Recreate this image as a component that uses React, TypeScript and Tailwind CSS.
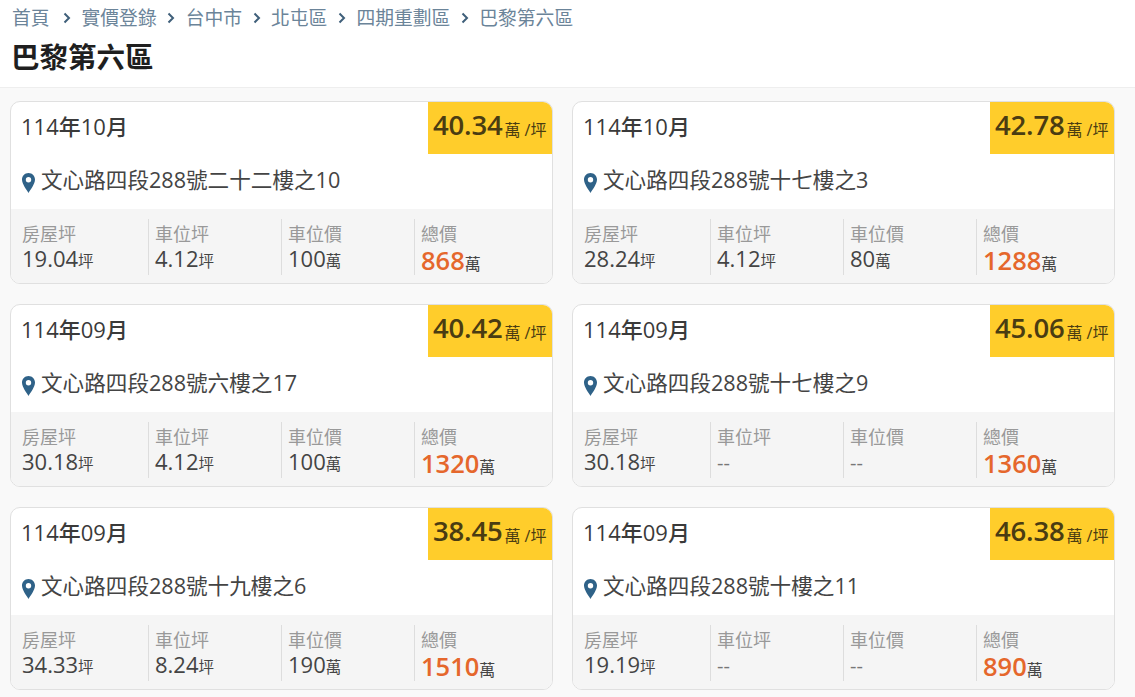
const crumbs = ["實價登錄", "台中市", "北屯區", "四期重劃區", "巴黎第六區"];

const deals = [
  { date: "114年10月", unit: "40.34", addr: "文心路四段288號二十二樓之10", house: "19.04", park: "4.12", parkPrice: "100", total: "868" },
  { date: "114年10月", unit: "42.78", addr: "文心路四段288號十七樓之3", house: "28.24", park: "4.12", parkPrice: "80", total: "1288" },
  { date: "114年09月", unit: "40.42", addr: "文心路四段288號六樓之17", house: "30.18", park: "4.12", parkPrice: "100", total: "1320" },
  { date: "114年09月", unit: "45.06", addr: "文心路四段288號十七樓之9", house: "30.18", park: "", parkPrice: "", total: "1360" },
  { date: "114年09月", unit: "38.45", addr: "文心路四段288號十九樓之6", house: "34.33", park: "8.24", parkPrice: "190", total: "1510" },
  { date: "114年09月", unit: "46.38", addr: "文心路四段288號十樓之11", house: "19.19", park: "", parkPrice: "", total: "890" },
];

function Chevron() {
  return (
    <svg width="8" height="12" viewBox="0 0 8 12" fill="none" className="mx-[10.500px] shrink-0">
      <path d="M1.500 1.500 6 6l-4.500 4.500" stroke="#3f5f7a" strokeWidth="2" />
    </svg>
  );
}

function Pin() {
  return (
    <svg width="13" height="20" viewBox="0 0 13 20" className="mt-[4px] shrink-0">
      <path
        fillRule="evenodd"
        d="M6.500 0C2.900 0 0 2.900 0 6.500 0 11 4.500 16.500 6.500 20 8.500 16.500 13 11 13 6.500 13 2.900 10.100 0 6.500 0Zm0 4a2.700 2.700 0 1 1 0 5.400 2.700 2.700 0 0 1 0-5.400Z"
        fill="#2f6288"
      />
    </svg>
  );
}

function Stat({ label, value, unit, first }: { label: string; value: string; unit: string; first?: boolean }) {
  return (
    <div className={first ? "h-[56px] w-[138px] border-r border-[#dddddd] pl-[11px] pt-[3px]" : "h-[56px] w-[133px] border-r border-[#dddddd] pl-[6px] pt-[3px]"}>
      <div className="text-[18px] leading-[24px] text-[#999999]">{label}</div>
      {value ? (
        <div className="h-[28px] text-[22px] leading-[25px] text-[#444444]">
          {value}
          <span className="text-[15.500px]">{unit}</span>
        </div>
      ) : (
        <div className="h-[28px] text-[20px] leading-[28px] text-[#777777]">--</div>
      )}
    </div>
  );
}

function DealCard({ deal }: { deal: (typeof deals)[number] }) {
  return (
    <div className="flex h-[183px] flex-col overflow-hidden rounded-[10px] border border-[#e0e0e0] bg-white">
      <div className="flex h-[52px] shrink-0 justify-between">
        <div className="pl-[10px] pt-[8px] text-[22px] leading-[32px] font-medium text-[#3a3a3a]">{deal.date}</div>
        <div className="flex w-[124px] items-start bg-[#ffcd2b] pl-[5px] pt-[4px] text-[#4a3c12]">
          <span className="text-[27.500px] leading-[38px] font-semibold tracking-[-0.2px]">{deal.unit}</span>
          <span className="pl-[2px] pt-[12px] text-[16px] leading-[24px] whitespace-pre">萬 /坪</span>
        </div>
      </div>
      <div className="flex h-[55px] shrink-0 items-center gap-[6px] pb-[2px] pl-[11px] text-[21.600px] text-[#444444]">
        <Pin />
        <span>{deal.addr}</span>
      </div>
      <div className="flex h-[74px] shrink-0 bg-[#f5f5f5] pt-[10px]">
        <Stat first label="房屋坪" value={deal.house} unit="坪" />
        <Stat label="車位坪" value={deal.park} unit="坪" />
        <Stat label="車位價" value={deal.parkPrice} unit="萬" />
        <div className="h-[56px] flex-1 pl-[6px] pt-[3px]">
          <div className="text-[18px] leading-[24px] text-[#999999]">總價</div>
          <div className="h-[28px] text-[16px] leading-[28px] text-[#444444]">
            <span className="text-[25.500px] font-semibold text-[#e5672c]">{deal.total}</span>萬
          </div>
        </div>
      </div>
    </div>
  );
}

export default function App() {
  return (
    <div className="h-[697px] overflow-hidden bg-[#f9f9f9] font-['Open_Sans','Noto_Sans_CJK_TC',sans-serif]">
      <div className="h-[88px] border-b border-[#eeeeee] bg-white pl-[12px] pt-[5px]">
        <div className="flex h-[26px] items-center text-[18.800px] text-[#6b8499]">
          <span className="mr-[3px]">首頁</span>
          {crumbs.map((c) => (
            <span key={c} className="flex items-center">
              <Chevron />
              {c}
            </span>
          ))}
        </div>
        <h1 className="mt-[5px] -ml-[1px] text-[28.500px] leading-[42px] font-semibold text-[#1f1f1f]">巴黎第六區</h1>
      </div>
      <div className="grid grid-cols-[543px_543px] gap-x-[19px] gap-y-[20px] pl-[10px] pt-[13px]">
        {deals.map((d) => (
          <DealCard key={d.addr} deal={d} />
        ))}
      </div>
    </div>
  );
}
